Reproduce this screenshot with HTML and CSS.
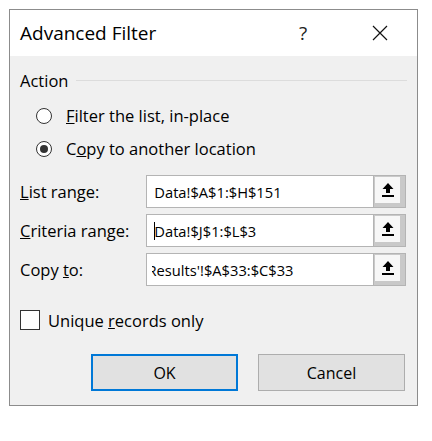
FILE: index.html
```html
<!DOCTYPE html>
<html>
<head>
<meta charset="utf-8">
<link rel="stylesheet" href="styles.css">
</head>
<body>
<div class="dialog">
  <div class="titlebar">
    <div class="title">Advanced Filter</div>
    <div class="help">?</div>
    <div class="close">
      <svg width="16" height="16" viewBox="0 0 16 16"><path d="M1 1 L15 15 M15 1 L1 15" stroke="#111" stroke-width="1.2" fill="none"/></svg>
    </div>
  </div>
  <div class="content">
    <div class="group-header"><span>Action</span><div class="rule"></div></div>
    <div class="radios">
      <div class="radio-row"><span class="radio"></span><span><u>F</u>ilter the list, in-place</span></div>
      <div class="radio-row"><span class="radio checked"></span><span>C<u>o</u>py to another location</span></div>
    </div>
    <div class="ranges">
      <div class="range-row">
        <div class="label"><span><u>L</u>ist range:</span></div>
        <div class="input"><div class="field"><span class="val">Data!$A$1:$H$151</span></div></div>
        <div class="pick"><div class="pick-inner"><svg width="12" height="14" viewBox="0 0 12 14"><path d="M6 0 L11.5 6 L8 6 L8 10 L4 10 L4 6 L0.5 6 Z" fill="#000"/><rect x="0" y="12" width="12" height="2" fill="#000"/></svg></div></div>
      </div>
      <div class="range-row">
        <div class="label"><span><u>C</u>riteria range:</span></div>
        <div class="input"><span class="caret"></span><div class="field"><span class="val">Data!$J$1:$L$3</span></div></div>
        <div class="pick"><div class="pick-inner"><svg width="12" height="14" viewBox="0 0 12 14"><path d="M6 0 L11.5 6 L8 6 L8 10 L4 10 L4 6 L0.5 6 Z" fill="#000"/><rect x="0" y="12" width="12" height="2" fill="#000"/></svg></div></div>
      </div>
      <div class="range-row">
        <div class="label"><span>Copy <u>t</u>o:</span></div>
        <div class="input"><div class="field"><span class="val scrolled">'Results'!$A$33:$C$33</span></div></div>
        <div class="pick"><div class="pick-inner"><svg width="12" height="14" viewBox="0 0 12 14"><path d="M6 0 L11.5 6 L8 6 L8 10 L4 10 L4 6 L0.5 6 Z" fill="#000"/><rect x="0" y="12" width="12" height="2" fill="#000"/></svg></div></div>
      </div>
    </div>
    <div class="check-row"><span class="checkbox"></span><span>Unique <u>r</u>ecords only</span></div>
    <div class="buttons">
      <div class="btn default">OK</div>
      <div class="btn">Cancel</div>
    </div>
  </div>
</div>
</body>
</html>
```
FILE: styles.css
```css
html, body {
  margin: 0;
  padding: 0;
  background: #ffffff;
}
body {
  font-family: "Open Sans", "Noto Sans", sans-serif;
  font-size: 16.5px;
  color: #000;
}
.dialog {
  box-sizing: border-box;
  margin: 9px 0 0 9px;
  width: 409px;
  height: 397px;
  border: 1px solid #8c8c8c;
  display: flex;
  flex-direction: column;
}
.titlebar {
  height: 46px;
  background: #fff;
  display: flex;
  align-items: center;
}
.title {
  font-size: 19px;
  padding-left: 10px;
  flex: 1;
}
.help {
  font-size: 19px;
  width: 20px;
  margin-right: 53px;
  color: #222;
}
.close {
  width: 16px;
  height: 16px;
  margin-right: 29px;
  display: flex;
}
.content {
  flex: 1;
  background: #f0f0f0;
  display: flex;
  flex-direction: column;
  padding: 0 11px 0 10px;
}
.group-header {
  margin-top: 14px;
  height: 20px;
  display: flex;
  align-items: center;
}
.rule {
  flex: 1;
  height: 1px;
  background: #dcdcdc;
  margin-left: 8px;
  margin-right: -1px;
}
.radios {
  margin-top: 9px;
}
.radio-row {
  height: 33px;
  display: flex;
  align-items: center;
  padding-left: 16px;
}
.radio {
  box-sizing: border-box;
  width: 16px;
  height: 16px;
  border: 1px solid #333;
  border-radius: 50%;
  background: #fff;
  margin-right: 14px;
  display: flex;
  align-items: center;
  justify-content: center;
}
.radio.checked::after {
  content: "";
  width: 8px;
  height: 8px;
  border-radius: 50%;
  background: #333;
}
.ranges {
  margin-top: 10px;
  display: flex;
  flex-direction: column;
  gap: 6px;
}
.range-row {
  height: 33px;
  display: flex;
  align-items: stretch;
}
.label {
  width: 127px;
  display: flex;
  align-items: center;
  white-space: nowrap;
}
.input {
  box-sizing: border-box;
  width: 228px;
  border: 1px solid #b4b4b4;
  border-right: none;
  background: #fff;
  display: flex;
  align-items: center;
  padding-left: 5px;
  padding-right: 2px;
  position: relative;
  font-size: 14.7px;
}
.field {
  flex: 1;
  overflow: hidden;
  white-space: nowrap;
  display: flex;
}
.val {
  margin-left: 2px;
}
.val.scrolled {
  margin-left: -8px;
}
.caret {
  position: absolute;
  left: 7px;
  top: 7px;
  width: 1px;
  height: 18px;
  background: #000;
}
.pick {
  box-sizing: border-box;
  width: 33px;
  background: #c9c9c9;
  border: 1px solid #b4b4b4;
  padding: 1px 5px 4px 1px;
  display: flex;
}
.pick-inner {
  flex: 1;
  background: #f7f7f7;
  display: flex;
  align-items: center;
  justify-content: center;
}
.check-row {
  margin-top: 24px;
  height: 20px;
  display: flex;
  align-items: center;
}
.checkbox {
  box-sizing: border-box;
  width: 20px;
  height: 20px;
  border: 1px solid #333;
  background: #fff;
  margin-right: 8px;
}
.buttons {
  margin-top: 24px;
  display: flex;
  justify-content: flex-end;
  gap: 20px;
  padding-right: 1px;
}
.btn {
  box-sizing: border-box;
  width: 147px;
  height: 37px;
  background: #e1e1e1;
  border: 1px solid #adadad;
  display: flex;
  align-items: center;
  justify-content: center;
  font-size: 16px;
}
.btn.default {
  border: 2px solid #0078d7;
}
```
